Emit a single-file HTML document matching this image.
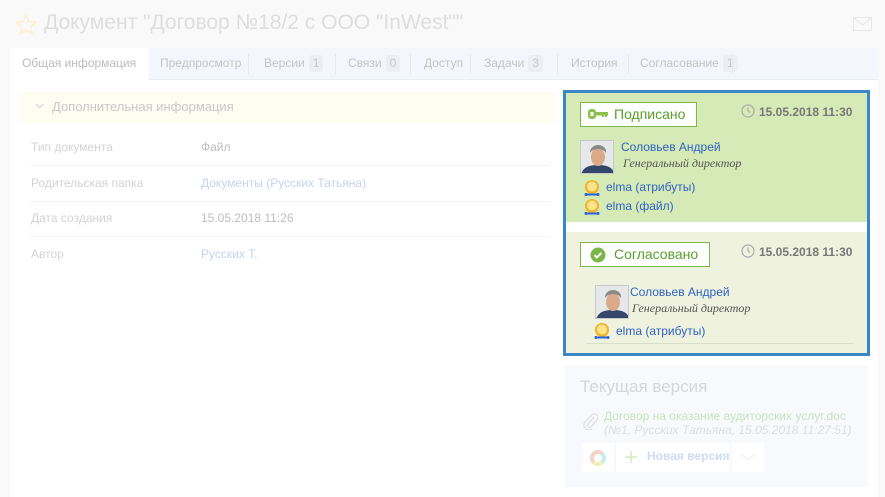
<!DOCTYPE html>
<html><head><meta charset="utf-8"><style>
*{box-sizing:border-box;margin:0;padding:0}
body{width:885px;height:497px;overflow:hidden;background:#f9f9fa;font-family:"Liberation Sans","Noto Sans CJK SC",sans-serif;position:relative;font-size:12px}
.abs{position:absolute}
.title{left:44px;top:11px;font-size:21px;color:#dedede;white-space:nowrap}
.panel{left:10px;top:48px;width:868px;height:449px;background:#fff}
.tabs{left:10px;top:48px;width:868px;height:32px;background:#f3f7fd;border-bottom:1px solid #e8eef7}
.tab{position:absolute;top:0;height:32px;line-height:31px;color:#c4c4c4;font-size:12px;white-space:nowrap}
.badge{display:inline-block;background:#ebeff5;border-radius:3px;padding:0 4px;line-height:17px;margin-left:4px;color:#c8c8c8}
.sep{position:absolute;top:6px;width:1px;height:20px;background:#e6e9ee}
.lbl{color:#d3d3d3;font-size:12px;white-space:nowrap}
.val{color:#bdbdbd;font-size:12px;white-space:nowrap}
.lnk{color:#c5d3ef}
.hr{left:30px;width:520px;height:1px;background:#f4f4f4}
.status{background:#fff;border:1px solid #7ab648;color:#5a9e2c;font-size:14px;height:25px;line-height:23px;white-space:nowrap}
.date{color:#777;font-size:12px;font-weight:bold;white-space:nowrap}
.name{color:#2f63c4;font-size:12px;white-space:nowrap}
.pos{color:#555;font-family:"Liberation Serif",serif;font-style:italic;font-size:12px;white-space:nowrap}
.ava{width:34px;height:34px;border:1px solid #c8c8c8;overflow:hidden}
.medal{width:16px;height:18px}
.el{color:#2f63c4;font-size:12px;white-space:nowrap}
</style></head><body>
<svg class="abs" style="left:14px;top:13px" width="24" height="24" viewBox="0 0 24 24"><path d="M12 2l2.9 6.6 7.1.6-5.4 4.7 1.6 7-6.2-3.8-6.2 3.8 1.6-7L2 9.2l7.1-.6z" fill="none" stroke="#fdf0c4" stroke-width="1.2"/></svg>
<div class="abs title">Документ "Договор №18/2 с ООО "InWest""</div>
<svg class="abs" style="left:853px;top:17px" width="19" height="14" viewBox="0 0 19 14"><rect x="0.5" y="0.5" width="18" height="13" fill="none" stroke="#e8e8e8"/><path d="M1 1l8.5 7 8.5-7" fill="none" stroke="#e8e8e8"/></svg>
<div class="abs panel"></div>
<div class="abs tabs">
<div class="tab" style="left:0;width:139px;background:#fff;height:33px;padding-left:12px;color:#bbb">Общая информация</div>
<div class="tab" style="left:150px">Предпросмотр</div>
<div class="sep" style="left:238px"></div>
<div class="tab" style="left:254px">Версии<span class="badge">1</span></div>
<div class="sep" style="left:325px"></div>
<div class="tab" style="left:338px">Связи<span class="badge">0</span></div>
<div class="sep" style="left:400px"></div>
<div class="tab" style="left:414px">Доступ</div>
<div class="sep" style="left:460px"></div>
<div class="tab" style="left:474px">Задачи<span class="badge">3</span></div>
<div class="sep" style="left:547px"></div>
<div class="tab" style="left:561px">История</div>
<div class="sep" style="left:618px"></div>
<div class="tab" style="left:630px">Согласование<span class="badge">1</span></div>
<div class="sep" style="left:722px"></div>
</div>
<div class="abs" style="left:20px;top:92px;width:535px;height:31px;background:#fffcf2"></div>
<svg class="abs" style="left:35px;top:103px" width="9" height="6" viewBox="0 0 9 6"><path d="M1 1l3.5 3.5L8 1" fill="none" stroke="#d8d8d8" stroke-width="1.5"/></svg>
<div class="abs lbl" style="left:52px;top:99px;font-size:13px;color:#c8c8c8">Дополнительная информация</div>
<div class="abs lbl" style="left:31px;top:140px">Тип документа</div>
<div class="abs val" style="left:201px;top:140px">Файл</div>
<div class="abs hr" style="top:165px"></div>
<div class="abs lbl" style="left:31px;top:176px">Родительская папка</div>
<div class="abs val lnk" style="left:201px;top:176px">Документы (Русских Татьяна)</div>
<div class="abs hr" style="top:201px"></div>
<div class="abs lbl" style="left:31px;top:211px">Дата создания</div>
<div class="abs val" style="left:201px;top:211px">15.05.2018 11:26</div>
<div class="abs hr" style="top:236px"></div>
<div class="abs lbl" style="left:31px;top:247px">Автор</div>
<div class="abs val lnk" style="left:201px;top:247px">Русских Т.</div>

<div class="abs" style="left:563px;top:90px;width:307px;height:266px;border:3px solid #3a87c8;background:#fff"></div>
<div class="abs" style="left:566px;top:93px;width:301px;height:129px;background:#d5eab7"></div>
<div class="abs" style="left:566px;top:232px;width:301px;height:121px;background:#eef2de"></div>
<div class="abs" style="left:586px;top:343px;width:267px;height:1px;background:#d8dfc8"></div>

<div class="abs status" style="left:580px;top:102px;width:117px;padding-left:33px">Подписано</div>
<svg class="abs" style="left:588px;top:108px" width="20" height="12" viewBox="0 0 20 12"><rect x="0" y="1" width="8" height="10" rx="3" fill="#8cc152"/><rect x="2.5" y="4" width="3" height="4" fill="#fff"/><rect x="7" y="4" width="13" height="3.5" fill="#8cc152"/><rect x="14" y="7" width="2" height="2" fill="#8cc152"/><rect x="17" y="7" width="2" height="2" fill="#8cc152"/></svg>
<svg class="abs" style="left:741px;top:104px" width="14" height="14" viewBox="0 0 14 14"><circle cx="7" cy="7" r="6" fill="none" stroke="#aaa" stroke-width="1.2"/><path d="M7 3.5V7l2 1.5" fill="none" stroke="#aaa" stroke-width="1.2"/></svg>
<div class="abs date" style="left:759px;top:105px">15.05.2018 11:30</div>
<div class="abs ava" style="left:580px;top:140px"><svg width="34" height="34" viewBox="0 0 34 34"><rect width="34" height="34" fill="#e6e8ea"/><path d="M0 34c2-8 8-10 17-10s15 2 17 10z" fill="#34476a"/><ellipse cx="17" cy="16" rx="7" ry="9" fill="#d9a98a"/><path d="M9 12c0-6 5-8 8-8s9 2 8 8c-2-3-5-4-8-4s-6 1-8 4z" fill="#8a8a8a"/></svg></div>
<div class="abs name" style="left:621px;top:140px">Соловьев Андрей</div>
<div class="abs pos" style="left:623px;top:156px">Генеральный директор</div>
<svg class="abs medal" style="left:584px;top:179px" viewBox="0 0 16 18"><circle cx="8" cy="8" r="7" fill="#f0b429"/><circle cx="8" cy="7.5" r="5" fill="#fde48a"/><path d="M1 14.5h14v2H1z" fill="#2a64d6"/><circle cx="2" cy="15.5" r="1.5" fill="#2a64d6"/><circle cx="14" cy="15.5" r="1.5" fill="#2a64d6"/></svg>
<div class="abs el" style="left:606px;top:180px">elma (атрибуты)</div>
<svg class="abs medal" style="left:584px;top:198px" viewBox="0 0 16 18"><circle cx="8" cy="8" r="7" fill="#f0b429"/><circle cx="8" cy="7.5" r="5" fill="#fde48a"/><path d="M1 14.5h14v2H1z" fill="#2a64d6"/><circle cx="2" cy="15.5" r="1.5" fill="#2a64d6"/><circle cx="14" cy="15.5" r="1.5" fill="#2a64d6"/></svg>
<div class="abs el" style="left:606px;top:199px">elma (файл)</div>

<div class="abs status" style="left:580px;top:242px;width:130px;padding-left:33px">Согласовано</div>
<svg class="abs" style="left:590px;top:247px" width="16" height="16" viewBox="0 0 16 16"><circle cx="8" cy="8" r="7.5" fill="#7ab648"/><path d="M4.5 8.2l2.3 2.3 4.5-4.5" fill="none" stroke="#fff" stroke-width="2"/></svg>
<svg class="abs" style="left:741px;top:244px" width="14" height="14" viewBox="0 0 14 14"><circle cx="7" cy="7" r="6" fill="none" stroke="#aaa" stroke-width="1.2"/><path d="M7 3.5V7l2 1.5" fill="none" stroke="#aaa" stroke-width="1.2"/></svg>
<div class="abs date" style="left:759px;top:245px">15.05.2018 11:30</div>
<div class="abs ava" style="left:595px;top:285px"><svg width="34" height="34" viewBox="0 0 34 34"><rect width="34" height="34" fill="#e6e8ea"/><path d="M0 34c2-8 8-10 17-10s15 2 17 10z" fill="#34476a"/><ellipse cx="17" cy="16" rx="7" ry="9" fill="#d9a98a"/><path d="M9 12c0-6 5-8 8-8s9 2 8 8c-2-3-5-4-8-4s-6 1-8 4z" fill="#8a8a8a"/></svg></div>
<div class="abs name" style="left:630px;top:285px">Соловьев Андрей</div>
<div class="abs pos" style="left:632px;top:301px">Генеральный директор</div>
<svg class="abs medal" style="left:594px;top:322px" viewBox="0 0 16 18"><circle cx="8" cy="8" r="7" fill="#f0b429"/><circle cx="8" cy="7.5" r="5" fill="#fde48a"/><path d="M1 14.5h14v2H1z" fill="#2a64d6"/><circle cx="2" cy="15.5" r="1.5" fill="#2a64d6"/><circle cx="14" cy="15.5" r="1.5" fill="#2a64d6"/></svg>
<div class="abs el" style="left:616px;top:324px">elma (атрибуты)</div>

<div class="abs" style="left:565px;top:365px;width:303px;height:122px;background:#f7f9fd"></div>
<div class="abs" style="left:580px;top:377px;font-size:17px;color:#d6d6d6">Текущая версия</div>
<svg class="abs" style="left:582px;top:412px" width="16" height="18" viewBox="0 0 16 18"><path d="M12 5l-6 7a2 2 0 0 0 3 3l6-7a3.5 3.5 0 0 0-5-5L3 10a5 5 0 0 0 7 7" fill="none" stroke="#e2e2e2" stroke-width="1.5"/></svg>
<div class="abs" style="left:604px;top:409px;color:#c8e3bc;white-space:nowrap">Договор на оказание аудиторских услуг.doc</div>
<div class="abs" style="left:604px;top:423px;color:#dedede;font-style:italic;white-space:nowrap">(№1, Русских Татьяна, 15.05.2018 11:27:51)</div>
<div class="abs" style="left:582px;top:443px;width:32px;height:29px;background:#fff"></div>
<div class="abs" style="left:590px;top:450px;width:16px;height:16px;border-radius:50%;border:4px solid #f3d3c8;border-right-color:#c8ecf2;border-bottom-color:#f4efb6"></div>
<div class="abs" style="left:616px;top:443px;width:113px;height:29px;background:#fff"></div>
<div class="abs" style="left:624px;top:448px;color:#dbeccd;font-size:24px;line-height:20px">+</div>
<div class="abs" style="left:647px;top:449px;color:#cfdbf3;font-weight:bold;white-space:nowrap">Новая версия</div>
<div class="abs" style="left:732px;top:443px;width:32px;height:29px;background:#fff"></div>
<svg class="abs" style="left:740px;top:453px" width="16" height="9" viewBox="0 0 16 9"><path d="M1 1l7 6 7-6" fill="none" stroke="#ececec"/></svg>
</body></html>
